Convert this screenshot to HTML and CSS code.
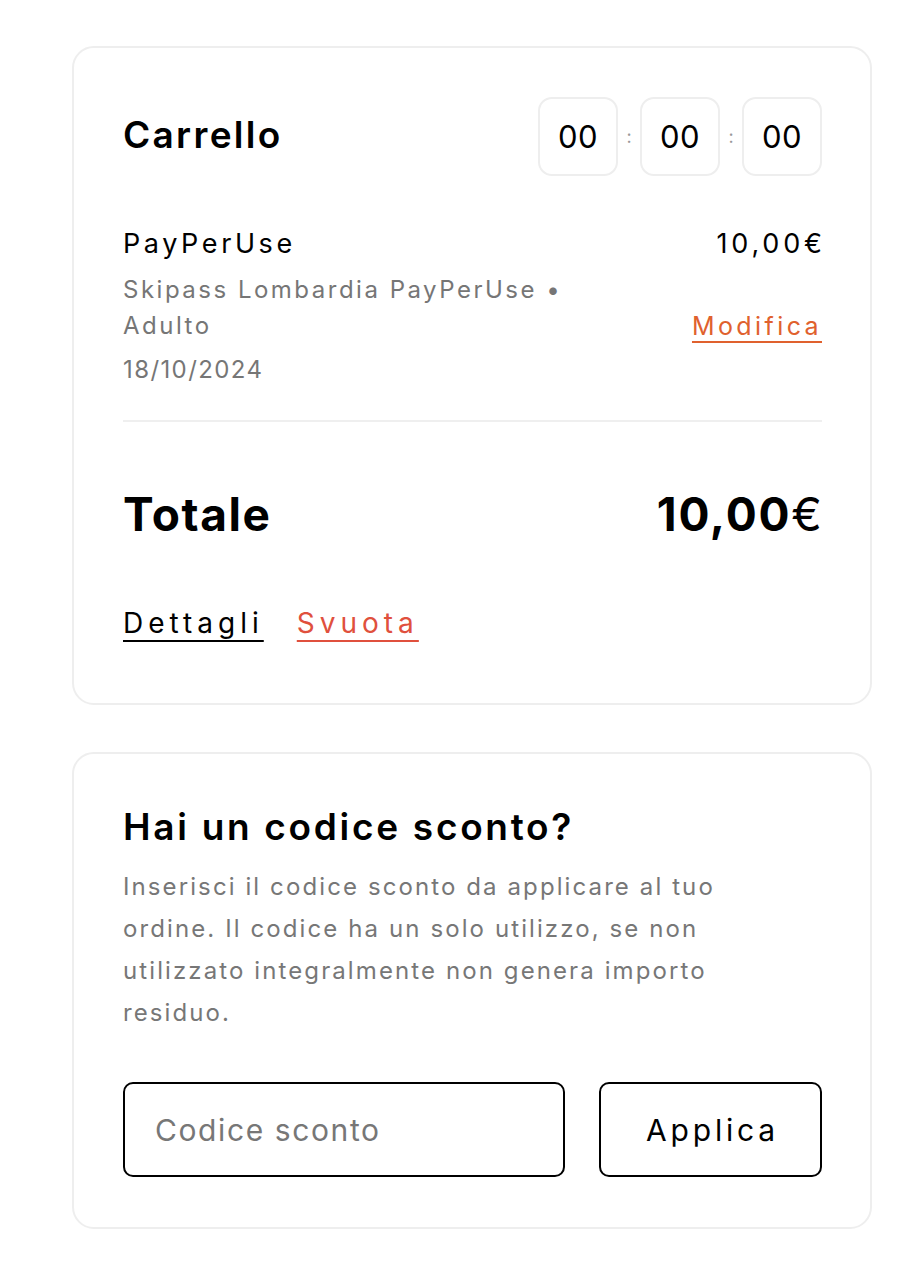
FILE: index.html
```html
<!DOCTYPE html>
<html lang="it">
<head>
<meta charset="utf-8">
<title>Carrello</title>
<link rel="stylesheet" href="styles.css">
</head>
<body>
<main class="column">
  <section class="card cart">
    <header class="cart-head">
      <h1 class="title">Carrello</h1>
      <div class="timer">
        <span class="tbox">00</span><span class="colon">:</span><span class="tbox">00</span><span class="colon">:</span><span class="tbox">00</span>
      </div>
    </header>
    <div class="item">
      <div class="item-info">
        <div class="item-name">PayPerUse</div>
        <div class="item-desc">Skipass Lombardia PayPerUse •<br>Adulto</div>
        <div class="item-date">18/10/2024</div>
      </div>
      <div class="item-side">
        <div class="item-price">10,00€</div>
        <a class="modify" href="#">Modifica</a>
      </div>
    </div>
    <hr class="divider">
    <div class="total">
      <span class="total-label">Totale</span>
      <span class="total-value">10,00<span class="euro">€</span></span>
    </div>
    <div class="actions">
      <a class="link-details" href="#">Dettagli</a>
      <a class="link-empty" href="#">Svuota</a>
    </div>
  </section>
  <section class="card discount">
    <h2 class="title2">Hai un codice sconto?</h2>
    <p class="desc">Inserisci il codice sconto da applicare al tuo ordine. Il codice ha un solo utilizzo, se non utilizzato integralmente non genera importo residuo.</p>
    <form class="code-form">
      <input class="code-input" type="text" placeholder="Codice sconto">
      <button class="apply" type="button">Applica</button>
    </form>
  </section>
</main>
</body>
</html>
```
FILE: styles.css
```css
* { box-sizing: border-box; }
html, body { margin: 0; padding: 0; background: #fff; }
body {
  font-family: Inter, "Open Sans", "DejaVu Sans", sans-serif;
  color: #000;
}
.column {
  width: 800px;
  margin-left: 72px;
  padding-top: 46px;
  display: flex;
  flex-direction: column;
  gap: 47px;
}
.card {
  border: 2px solid #eeeeee;
  border-radius: 22px;
  padding: 49px 48px 48px 49px;
  background: #fff;
}
.discount { padding-bottom: 50px; }
.cart-head {
  display: flex;
  justify-content: space-between;
  align-items: center;
}
.title {
  margin: 0 0 4px;
  font-size: 37px;
  font-weight: 600;
  letter-spacing: 2.3px;
  line-height: 44px;
}
.timer { display: flex; align-items: center; }
.tbox {
  width: 80px;
  height: 79px;
  border: 2px solid #eeeeee;
  border-radius: 14px;
  display: flex;
  align-items: center;
  justify-content: center;
  font-size: 31px;
  font-weight: 400;
  letter-spacing: 0.5px;
}
.colon {
  width: 22px;
  text-align: center;
  color: #999;
  font-size: 18px;
}
.item {
  display: flex;
  justify-content: space-between;
  margin-top: 50px;
}
.item-name { font-size: 27px; line-height: 36px; letter-spacing: 3.6px; }
.item-desc { font-size: 24px; line-height: 36px; color: #767676; margin-top: 10px; letter-spacing: 2.5px; }
.item-date { font-size: 24px; line-height: 36px; color: #767676; margin-top: 8px; letter-spacing: 1.4px; }
.item-side { display: flex; flex-direction: column; align-items: flex-end; }
.item-price { font-size: 27px; line-height: 36px; letter-spacing: 3.8px; margin-right: -3.8px; }
.modify {
  margin-top: 46px;
  font-size: 25px;
  line-height: 36px;
  color: #e0612e;
  letter-spacing: 3.4px;
  margin-right: -3.4px;
  padding-right: 3.4px;
  text-decoration: underline;
  text-underline-offset: 6px;
  text-decoration-thickness: 2px;
}
.divider {
  border: 0;
  height: 2px;
  background: #efefef;
  margin: 32px 0 0;
}
.total {
  display: flex;
  justify-content: space-between;
  align-items: center;
  margin-top: 66px;
  line-height: 52px;
}
.total-label { font-size: 46px; font-weight: 700; letter-spacing: 1.6px; }
.total-value { font-size: 46px; font-weight: 700; letter-spacing: 1.8px; margin-right: -1.8px; }
.euro { font-weight: 400; }
.actions {
  display: flex;
  gap: 33px;
  margin-top: 65px;
  margin-bottom: 14px;
}
.actions a {
  font-size: 28px;
  line-height: 36px;
  letter-spacing: 5px;
  text-decoration: underline;
  text-underline-offset: 7px;
  text-decoration-thickness: 2px;
}
.link-details { color: #000; }
.link-empty { color: #e0503d; }
.title2 {
  margin: 2px 0 0;
  font-size: 37px;
  font-weight: 600;
  line-height: 44px;
  letter-spacing: 2.7px;
}
.desc {
  max-width: 680px;
  margin: 17px 0 0;
  font-size: 24px;
  line-height: 42px;
  color: #777;
  letter-spacing: 2.1px;
}
.code-form {
  display: flex;
  gap: 34px;
  margin-top: 48px;
}
.code-input {
  flex: 1 1 auto;
  min-width: 0;
  height: 95px;
  border: 2px solid #000;
  border-radius: 10px;
  padding: 0 30px;
  font-family: inherit;
  font-size: 30px;
  letter-spacing: 1.6px;
  color: #000;
  outline: none;
}
.code-input::placeholder { color: #777; }
.apply {
  flex: none;
  width: 223px;
  height: 95px;
  border: 2px solid #000;
  border-radius: 10px;
  background: #fff;
  font-family: inherit;
  font-size: 30px;
  letter-spacing: 3.8px;
  padding: 0 0 0 4px;
  color: #000;
}
```
